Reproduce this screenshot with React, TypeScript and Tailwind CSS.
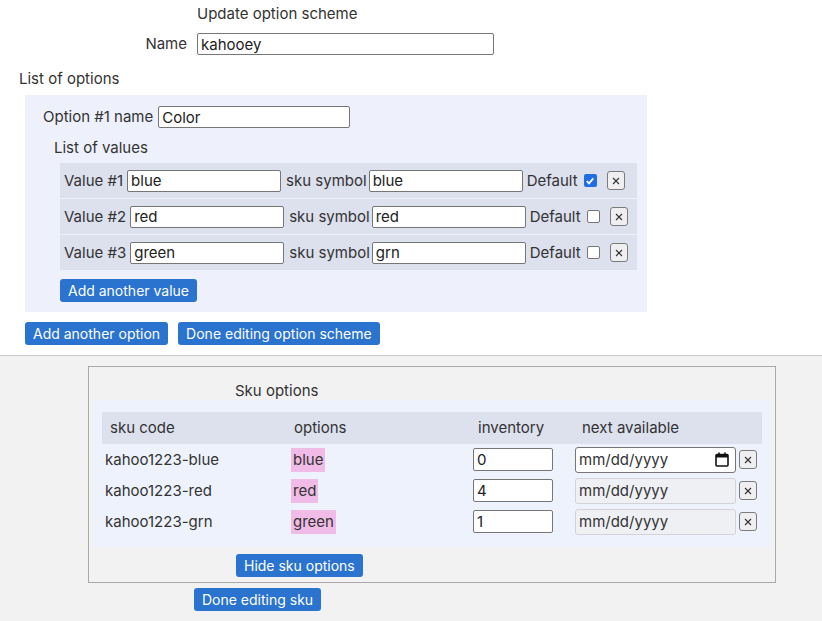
import React from "react";

const inputCls =
  "block h-[22px] border border-[#767676] rounded-[2px] bg-white px-[3px] text-[15px] leading-[20px] text-[#222] outline-none";

function XBtn() {
  return (
    <span className="flex h-[19px] w-[18px] shrink-0 items-center justify-center rounded-[3px] border border-[#7b7b7b] bg-[#efeff2]">
      <svg width="8" height="8" viewBox="0 0 8 8">
        <path d="M1 1L7 7M7 1L1 7" stroke="#333" strokeWidth="1.1" />
      </svg>
    </span>
  );
}

function Check({ on }: { on: boolean }) {
  return on ? (
    <span className="flex h-[13px] w-[13px] shrink-0 items-center justify-center rounded-[2px] bg-[#1f6fe0]">
      <svg width="10" height="10" viewBox="0 0 10 10">
        <path d="M1.8 5.2L4 7.4L8.3 2.4" stroke="#fff" strokeWidth="1.8" fill="none" />
      </svg>
    </span>
  ) : (
    <span className="block h-[13px] w-[13px] shrink-0 rounded-[2px] border border-[#767676] bg-white" />
  );
}

function Btn({ children }: { children: React.ReactNode }) {
  return (
    <span className="flex h-[23px] items-center rounded-[3px] bg-[#2a73cf] px-[8px] text-[14px] leading-[20px] text-white">
      {children}
    </span>
  );
}

const values = [
  { n: 1, v: "blue", s: "blue", d: true },
  { n: 2, v: "red", s: "red", d: false },
  { n: 3, v: "green", s: "grn", d: false },
];

const skus = [
  { c: "kahoo1223-blue", o: "blue", i: "0", first: true },
  { c: "kahoo1223-red", o: "red", i: "4", first: false },
  { c: "kahoo1223-grn", o: "green", i: "1", first: false },
];

export default function App() {
  return (
    <div
      className="min-h-[621px] bg-[#f2f2f2] text-[15px] leading-[20px] text-[#333]"
      style={{ fontFamily: "Inter, 'Noto Sans', sans-serif" }}
    >
      <div className="border-b border-[#c9c9c9] bg-white pb-[10px] pt-[4px]">
        <div className="h-[20px] pl-[197px]">Update option scheme</div>
        <div className="mt-[9px] flex h-[22px] items-center">
          <span className="w-[187px] text-right">Name</span>
          <input className={inputCls + " ml-[10px] w-[297px]"} defaultValue="kahooey" />
        </div>
        <div className="mt-[14px] h-[20px] pl-[19px]">List of options</div>
        <div className="ml-[25px] mt-[6px] w-[622px] bg-[#eef1fc] pb-[10px] pt-[11px]">
          <div className="flex h-[22px] items-center pl-[18px]">
            <span>Option #1 name</span>
            <input className={inputCls + " ml-[5px] w-[192px]"} defaultValue="Color" />
          </div>
          <div className="mt-[10px] h-[20px] pl-[29px]">List of values</div>
          <div className="ml-[35px] mr-[10px] mt-[5px] flex flex-col gap-[1px]">
            {values.map((r) => (
              <div key={r.n} className="flex h-[35px] items-center bg-[#dde0ed] pl-[4px]">
                <span>Value #{r.n}</span>
                <input className={inputCls + " ml-[4px] w-[154px]"} defaultValue={r.v} />
                <span className="ml-[5px]">sku symbol</span>
                <input className={inputCls + " ml-[2px] w-[154px]"} defaultValue={r.s} />
                <span className="ml-[4px]">Default</span>
                <span className="ml-[6px] flex">
                  <Check on={r.d} />
                </span>
                <span className="ml-[10px] flex">
                  <XBtn />
                </span>
              </div>
            ))}
          </div>
          <div className="ml-[35px] mt-[9px] flex">
            <Btn>Add another value</Btn>
          </div>
        </div>
        <div className="ml-[25px] mt-[10px] flex gap-[10px]">
          <Btn>Add another option</Btn>
          <Btn>Done editing option scheme</Btn>
        </div>
      </div>

      <div className="ml-[88px] mt-[10px] h-[217px] w-[688px] border border-[#a9a9a9] px-[4px]">
        <div className="h-[20px] pl-[142px] mt-[14px]">Sku options</div>
        <div className="mt-[-1px] bg-[#eef2fc] px-[9px] pb-[10px] pt-[12px]">
          <div className="grid h-[32px] grid-cols-[184px_184px_104px_186px] items-center bg-[#dde0ed]">
            <span className="pl-[8px]">sku code</span>
            <span className="pl-[8px]">options</span>
            <span className="pl-[8px]">inventory</span>
            <span className="pl-[8px]">next available</span>
          </div>
          {skus.map((s) => (
            <div
              key={s.c}
              className="grid h-[31px] grid-cols-[184px_184px_104px_186px] items-center"
            >
              <span className="pl-[3px]">{s.c}</span>
              <span className="flex pl-[5px]">
                <span className="bg-[#f0bce7] px-[2px] py-[2px]">{s.o}</span>
              </span>
              <span className="flex pl-[3px]">
                <input className={inputCls + " h-[23px] w-[80px]"} defaultValue={s.i} />
              </span>
              <span className="flex items-center pl-[1px]">
                {s.first ? (
                  <span className="flex h-[26px] w-[161px] items-center justify-between rounded-[3px] border border-[#767676] bg-white pl-[3px] pr-[6px]">
                    <span>mm/dd/yyyy</span>
                    <svg width="14" height="15" viewBox="0 0 14 15">
                      <rect x="1" y="2.5" width="12" height="11.5" rx="1" fill="none" stroke="#111" strokeWidth="1.6" />
                      <rect x="1" y="2.5" width="12" height="3" fill="#111" />
                      <path d="M4 0.5V3M10 0.5V3" stroke="#111" strokeWidth="1.6" />
                    </svg>
                  </span>
                ) : (
                  <span className="flex h-[26px] w-[161px] items-center rounded-[3px] border border-[#d2d2d8] bg-[#eff0f4] pl-[3px]">
                    mm/dd/yyyy
                  </span>
                )}
                <span className="ml-[3px] flex">
                  <XBtn />
                </span>
              </span>
            </div>
          ))}
        </div>
        <div className="ml-[143px] mt-[7px] flex">
          <Btn>Hide sku options</Btn>
        </div>
      </div>
      <div className="ml-[194px] mt-[5px] flex">
        <Btn>Done editing sku</Btn>
      </div>
    </div>
  );
}
